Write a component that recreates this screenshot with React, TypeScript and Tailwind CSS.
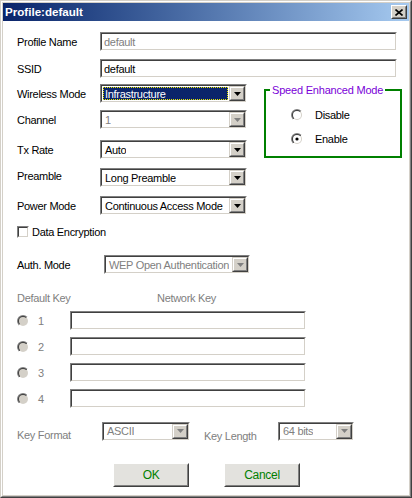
import React from "react";

const F = "font-['Liberation_Sans',Arial,sans-serif]";

function Radio({ checked = false, disabled = false }: { checked?: boolean; disabled?: boolean }) {
  return (
    <svg width="12" height="12" viewBox="0 0 12 12" className="shrink-0">
      <defs>
        <linearGradient id="ro" x1="0" y1="0" x2="1" y2="1">
          <stop offset="0.5" stopColor="#808080" />
          <stop offset="0.5" stopColor="#ffffff" />
        </linearGradient>
        <linearGradient id="ri" x1="0" y1="0" x2="1" y2="1">
          <stop offset="0.5" stopColor="#404040" />
          <stop offset="0.5" stopColor="#d4d0c8" />
        </linearGradient>
      </defs>
      <circle cx="6" cy="6" r="6" fill="url(#ro)" />
      <circle cx="6" cy="6" r="5" fill="url(#ri)" />
      <circle cx="6" cy="6" r="4" fill={disabled ? "#d4d0c8" : "#ffffff"} />
      {checked && <circle cx="6" cy="6" r="1.6" fill="#000" />}
    </svg>
  );
}

function Sunken({ className = "", children }: { className?: string; children?: React.ReactNode }) {
  return (
    <div className={`flex h-[19px] border border-t-[#808080] border-l-[#808080] border-b-white border-r-white ${className}`}>
      <div className="flex flex-1 min-w-0 border border-t-[#404040] border-l-[#404040] border-b-[#d4d0c8] border-r-[#d4d0c8] bg-white">
        {children}
      </div>
    </div>
  );
}

function DropBtn({ disabled = false }: { disabled?: boolean }) {
  return (
    <div className="flex w-[16px] shrink-0 bg-[#d4d0c8] border border-t-[#d4d0c8] border-l-[#d4d0c8] border-b-[#404040] border-r-[#404040]">
      <div className="flex flex-1 items-center justify-center border border-t-white border-l-white border-b-[#808080] border-r-[#808080]">
        <svg width="7" height="4" viewBox="0 0 7 4">
          <path d="M0 0h7L3.5 4z" fill={disabled ? "#808080" : "#000"} />
        </svg>
      </div>
    </div>
  );
}

function Combo({
  text,
  w,
  disabled = false,
  selected = false,
}: {
  text: string;
  w: string;
  disabled?: boolean;
  selected?: boolean;
}) {
  return (
    <Sunken className={w}>
      <div className="flex flex-1 min-w-0 items-center p-px">
        {selected ? (
          <div className="flex h-full flex-1 items-center border border-dotted border-[#e8e800] bg-[#0a246a] pl-px text-white">
            {text}
          </div>
        ) : (
          <span className={`pl-[2px] whitespace-nowrap overflow-hidden ${disabled ? "text-[#808080]" : "text-black"}`}>{text}</span>
        )}
      </div>
      <DropBtn disabled={disabled} />
    </Sunken>
  );
}

function TextBox({ value = "", w, grey = false }: { value?: string; w: string; grey?: boolean }) {
  return (
    <Sunken className={w}>
      <div className={`flex flex-1 items-center pl-[2px] ${grey ? "text-[#808080]" : "text-black"}`}>{value}</div>
    </Sunken>
  );
}

function Label({ children, w = "w-[83px]", grey = false }: { children: React.ReactNode; w?: string; grey?: boolean }) {
  return <div className={`${w} shrink-0 whitespace-nowrap ${grey ? "text-[#808080]" : "text-black"}`}>{children}</div>;
}

function WinButton({ children, w }: { children: React.ReactNode; w: string }) {
  return (
    <div className={`flex h-[24px] ${w} border border-t-white border-l-white border-b-[#404040] border-r-[#404040] bg-[#e3e2de]`}>
      <div className="flex flex-1 items-center justify-center border border-t-[#e3e2de] border-l-[#e3e2de] border-b-[#808080] border-r-[#808080] text-[#008000] text-[12px]">
        {children}
      </div>
    </div>
  );
}

export default function App() {
  return (
    <div
      className={`${F} w-[412px] h-[498px] bg-[#d4d0c8] border border-t-[#d4d0c8] border-l-[#d4d0c8] border-b-[#404040] border-r-[#404040] text-[11px] tracking-[-0.3px] text-black leading-[14px]`}
    >
      <div className="flex h-full flex-col border border-t-white border-l-white border-b-[#808080] border-r-[#808080] p-px">
        {/* Title bar */}
        <div className="flex h-[18px] shrink-0 items-center justify-between bg-gradient-to-r from-[#0a246a] to-[#a6caf0] pl-[2px] pr-[2px]">
          <span className="text-[11.6px] font-bold tracking-normal text-white">Profile:default</span>
          <div className="flex h-[14px] w-[16px] border border-t-white border-l-white border-b-[#404040] border-r-[#404040] bg-[#d4d0c8]">
            <div className="flex flex-1 items-center justify-center border border-t-[#d4d0c8] border-l-[#d4d0c8] border-b-[#808080] border-r-[#808080]">
              <svg width="8" height="7" viewBox="0 0 8 7">
                <path d="M0.5 0.5L7.5 6.5M7.5 0.5L0.5 6.5" stroke="#000" strokeWidth="1.6" />
              </svg>
            </div>
          </div>
        </div>

        {/* Body */}
        <div className="flex flex-1 flex-col bg-white pl-[14px]">
          <div className="mt-[11px] flex items-center">
            <Label>Profile Name</Label>
            <TextBox value="default" w="w-[297px]" grey />
          </div>
          <div className="mt-[8px] flex items-center">
            <Label>SSID</Label>
            <TextBox value="default" w="w-[297px]" />
          </div>

          <div className="mt-[6px] flex items-start">
            <div className="flex flex-col">
              <div className="flex items-center">
                <Label>Wireless Mode</Label>
                <Combo text="Infrastructure" w="w-[147px]" selected />
              </div>
              <div className="mt-[7px] flex items-center">
                <Label>Channel</Label>
                <Combo text="1" w="w-[147px]" disabled />
              </div>
              <div className="mt-[11px] flex items-center">
                <Label>Tx Rate</Label>
                <Combo text="Auto" w="w-[147px]" />
              </div>
            </div>
            <fieldset className="ml-[17px] mt-[-1px] h-[75px] w-[138px] border-2 border-[#008000]">
              <legend className="ml-[4px] px-[2px] text-[#7a00d8] tracking-[-0.2px]">Speed Enhanced Mode</legend>
              <div className="mt-[10px] flex h-[16px] items-center pl-[25px]">
                <Radio />
                <span className="ml-[12px]">Disable</span>
              </div>
              <div className="mt-[8px] flex h-[16px] items-center pl-[25px]">
                <Radio checked />
                <span className="ml-[12px]">Enable</span>
              </div>
            </fieldset>
          </div>

          <div className="mt-[9px] flex items-center">
            <Label>
              <span className="relative top-[-2px]">Preamble</span>
            </Label>
            <Combo text="Long Preamble" w="w-[147px]" />
          </div>
          <div className="mt-[9px] flex items-center">
            <Label>Power Mode</Label>
            <Combo text="Continuous Access Mode" w="w-[147px]" />
          </div>

          <div className="mt-[10px] flex h-[13px] items-center">
            <div className="flex h-[12px] w-[12px] border border-t-[#808080] border-l-[#808080] border-b-white border-r-white">
              <div className="flex-1 border border-t-[#404040] border-l-[#404040] border-b-[#d4d0c8] border-r-[#d4d0c8] bg-white" />
            </div>
            <span className="ml-[3px]">Data Encryption</span>
          </div>

          <div className="mt-[17px] flex items-center">
            <Label w="w-[87px]">Auth. Mode</Label>
            <Combo text="WEP Open Authentication" w="w-[146px]" disabled />
          </div>

          <div className="mt-[17px] flex items-center text-[#808080]">
            <div className="w-[140px]">Default Key</div>
            <div>Network Key</div>
          </div>

          {["1", "2", "3", "4"].map((n, i) => (
            <div key={n} className={`${i === 0 ? "mt-[6px]" : "mt-[7px]"} flex items-center`}>
              <div className="flex w-[53px] items-center">
                <Radio disabled />
                <span className="ml-[9px] text-[#808080]">{n}</span>
              </div>
              <TextBox w="w-[236px]" />
            </div>
          ))}

          <div className="mt-[11px] flex items-center">
            <Label w="w-[85px]" grey>
              <div className="pt-[7px]">Key Format</div>
            </Label>
            <Combo text="ASCII" w="w-[88px]" disabled />
            <div className="ml-[14px] w-[74px] pt-[10px] text-[#808080]">Key Length</div>
            <Combo text="64 bits" w="w-[76px]" disabled />
          </div>

          <div className="mt-[20px] flex items-center">
            <div className="ml-[96px]">
              <WinButton w="w-[76px]">OK</WinButton>
            </div>
            <div className="ml-[35px]">
              <WinButton w="w-[76px]">Cancel</WinButton>
            </div>
          </div>
        </div>
      </div>
    </div>
  );
}
